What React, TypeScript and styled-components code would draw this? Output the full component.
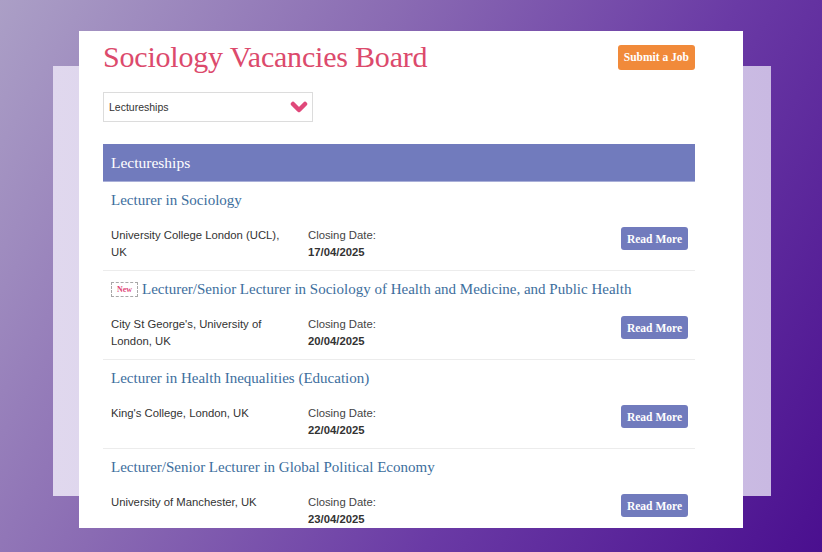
import styled, { createGlobalStyle } from 'styled-components';

const GlobalStyle = createGlobalStyle`
  html, body {
    margin: 0;
    padding: 0;
    width: 822px;
    height: 552px;
    overflow: hidden;
  }
  * {
    box-sizing: border-box;
  }
`;

const serif = `"Liberation Serif", "Times New Roman", serif`;
const sans = `"Liberation Sans", Arial, sans-serif`;

type Job = {
  title: string;
  org: string;
  closing: string;
  isNew?: boolean;
};

const jobs: Job[] = [
  {
    title: 'Lecturer in Sociology',
    org: 'University College London (UCL), UK',
    closing: '17/04/2025',
  },
  {
    title: 'Lecturer/Senior Lecturer in Sociology of Health and Medicine, and Public Health',
    org: "City St George's, University of London, UK",
    closing: '20/04/2025',
    isNew: true,
  },
  {
    title: 'Lecturer in Health Inequalities (Education)',
    org: "King's College, London, UK",
    closing: '22/04/2025',
  },
  {
    title: 'Lecturer/Senior Lecturer in Global Political Economy',
    org: 'University of Manchester, UK',
    closing: '23/04/2025',
  },
];

const Stage = styled.div`
  position: relative;
  width: 822px;
  height: 552px;
  padding-top: 31px;
  display: flex;
  justify-content: center;
  background: linear-gradient(120deg, #ab9fc6 0%, #8a6bb3 35%, #6a3aa5 65%, #4a0f8f 100%);

  &::before {
    content: '';
    position: absolute;
    left: 53px;
    top: 66px;
    width: 718px;
    height: 430px;
    background: linear-gradient(90deg, #e0d8ee 0%, #d3c8e8 60%, #c9b9e2 100%);
  }
`;

const Card = styled.main`
  position: relative;
  width: 664px;
  height: 497px;
  overflow: hidden;
  background: #ffffff;
  padding: 8px 48px 0 24px;
`;

const TopBar = styled.header`
  display: flex;
  align-items: center;
  justify-content: space-between;
  height: 36px;
`;

const BoardTitle = styled.h1`
  margin: 0;
  font-family: ${serif};
  font-weight: 400;
  font-size: 30px;
  line-height: 36px;
  color: #dc4a6c;
  letter-spacing: -0.2px;
`;

const SubmitButton = styled.button`
  border: none;
  border-radius: 3px;
  background: #f18a3a;
  color: #ffffff;
  font-family: ${serif};
  font-weight: 700;
  font-size: 11.5px;
  height: 25px;
  padding: 0 6px;
  cursor: pointer;
`;

const SelectBox = styled.div`
  margin-top: 17px;
  width: 210px;
  height: 30px;
  border: 1px solid #dcdcdc;
  display: flex;
  align-items: center;
  justify-content: space-between;
  padding: 0 4px 0 5px;
  font-family: ${sans};
  font-size: 10.5px;
  color: #333333;
`;

const SectionHeader = styled.h2`
  margin: 22px 0 0;
  height: 38px;
  display: flex;
  align-items: center;
  padding: 0 8px;
  background: #717bbd;
  border-bottom: 1px solid #a9afd8;
  font-family: ${serif};
  font-weight: 400;
  font-size: 15.5px;
  color: #ffffff;
`;

const JobItem = styled.article<{ $last?: boolean }>`
  padding: 7px 7px 9px 8px;
  border-bottom: ${({ $last }) => ($last ? 'none' : '1px solid #ececec')};
`;

const JobTitle = styled.h3`
  margin: 0;
  display: flex;
  align-items: center;
  gap: 4px;
  height: 22px;
  font-family: ${serif};
  font-weight: 400;
  font-size: 15px;
  color: #3d6e9d;
`;

const NewBadge = styled.span`
  display: inline-flex;
  align-items: center;
  justify-content: center;
  width: 27px;
  height: 15px;
  border: 1px dashed #a8a8a8;
  font-family: ${serif};
  font-weight: 700;
  font-size: 8px;
  color: #e0487a;
`;

const JobMeta = styled.div`
  margin-top: 16px;
  display: grid;
  grid-template-columns: 197px 1fr auto;
  align-items: start;
  font-family: ${sans};
  font-size: 11.3px;
  line-height: 17px;
  color: #333333;
`;

const Org = styled.div`
  padding-right: 14px;
`;

const Closing = styled.div`
  color: #444444;

  strong {
    display: block;
    color: #333333;
    font-weight: 700;
  }
`;

const ReadMore = styled.button`
  border: none;
  border-radius: 3px;
  background: #717bbd;
  color: #ffffff;
  font-family: ${serif};
  font-weight: 700;
  font-size: 11.5px;
  height: 23px;
  padding: 0 6px;
  cursor: pointer;
`;

const Chevron = () => (
  <svg width="18" height="14" viewBox="0 0 18 14">
    <polyline
      points="3,4 9,10 15,4"
      fill="none"
      stroke="#e0487a"
      strokeWidth="4.5"
      strokeLinecap="round"
      strokeLinejoin="round"
    />
  </svg>
);

export default function App() {
  return (
    <>
      <GlobalStyle />
      <Stage>
        <Card>
          <TopBar>
            <BoardTitle>Sociology Vacancies Board</BoardTitle>
            <SubmitButton>Submit a Job</SubmitButton>
          </TopBar>

          <SelectBox>
            <span>Lectureships</span>
            <Chevron />
          </SelectBox>

          <SectionHeader>Lectureships</SectionHeader>

          {jobs.map((job, i) => (
            <JobItem key={job.title} $last={i === jobs.length - 1}>
              <JobTitle>
                {job.isNew && <NewBadge>New</NewBadge>}
                {job.title}
              </JobTitle>
              <JobMeta>
                <Org>{job.org}</Org>
                <Closing>
                  Closing Date:
                  <strong>{job.closing}</strong>
                </Closing>
                <ReadMore>Read More</ReadMore>
              </JobMeta>
            </JobItem>
          ))}
        </Card>
      </Stage>
    </>
  );
}
